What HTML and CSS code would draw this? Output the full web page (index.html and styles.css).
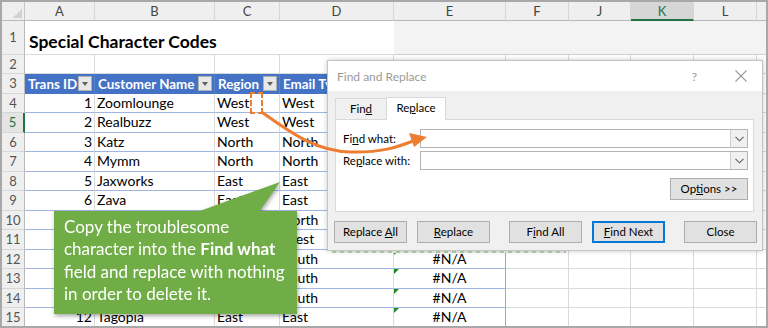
FILE: index.html
```html
<!DOCTYPE html>
<html>
<head>
<meta charset="utf-8">
<link rel="stylesheet" href="styles.css">
</head>
<body>
<div class="frame">
  <div class="sheet">
    <div class="corner"></div><div class="ch">A</div><div class="ch">B</div><div class="ch">C</div><div class="ch">D</div><div class="ch">E</div><div class="ch">F</div><div class="ch">J</div><div class="ch sel">K</div><div class="ch">L</div><div class="ch"></div>

    <div class="rh">1</div><div class="title">Special Character Codes</div><div class="r1rest"></div>

    <div class="rh">2</div><div class="c"></div><div class="c"></div><div class="c"></div><div class="c"></div><div class="c"></div><div class="c"></div><div class="c"></div><div class="c"></div><div class="c"></div><div class="c"></div>

    <div class="rh">3</div>
    <div class="th"><span>Trans ID</span><span class="dd"></span></div>
    <div class="th"><span>Customer Name</span><span class="dd"></span></div>
    <div class="th"><span>Region</span><span class="dd"></span></div>
    <div class="th"><span>Email Type</span><span class="dd"></span></div>
    <div class="th te"></div>
    <div class="c"></div><div class="c"></div><div class="c"></div><div class="c"></div><div class="c"></div>

    <div class="rh">4</div><div class="c t num">1</div><div class="c t">Zoomlounge</div><div class="c t">West</div><div class="c t">West</div><div class="c t te"></div><div class="c"></div><div class="c"></div><div class="c"></div><div class="c"></div><div class="c"></div>
    <div class="rh sel">5</div><div class="c t num">2</div><div class="c t">Realbuzz</div><div class="c t">West</div><div class="c t">West</div><div class="c t te"></div><div class="c"></div><div class="c"></div><div class="c"></div><div class="c"></div><div class="c"></div>
    <div class="rh">6</div><div class="c t num">3</div><div class="c t">Katz</div><div class="c t">North</div><div class="c t">North</div><div class="c t te"></div><div class="c"></div><div class="c"></div><div class="c"></div><div class="c"></div><div class="c"></div>
    <div class="rh">7</div><div class="c t num">4</div><div class="c t">Mymm</div><div class="c t">North</div><div class="c t">North</div><div class="c t te"></div><div class="c"></div><div class="c"></div><div class="c"></div><div class="c"></div><div class="c"></div>
    <div class="rh">8</div><div class="c t num">5</div><div class="c t">Jaxworks</div><div class="c t">East</div><div class="c t">East</div><div class="c t te"></div><div class="c"></div><div class="c"></div><div class="c"></div><div class="c"></div><div class="c"></div>
    <div class="rh">9</div><div class="c t num">6</div><div class="c t">Zava</div><div class="c t">East</div><div class="c t">East</div><div class="c t te"></div><div class="c"></div><div class="c"></div><div class="c"></div><div class="c"></div><div class="c"></div>
    <div class="rh">10</div><div class="c t num"></div><div class="c t"></div><div class="c t"></div><div class="c t">North</div><div class="c t te"></div><div class="c"></div><div class="c"></div><div class="c"></div><div class="c"></div><div class="c"></div>
    <div class="rh">11</div><div class="c t num"></div><div class="c t"></div><div class="c t"></div><div class="c t">West</div><div class="c t te"></div><div class="c"></div><div class="c"></div><div class="c"></div><div class="c"></div><div class="c"></div>
    <div class="rh">12</div><div class="c t num"></div><div class="c t"></div><div class="c t"></div><div class="c t">South</div><div class="c t te na">#N/A</div><div class="c"></div><div class="c"></div><div class="c"></div><div class="c"></div><div class="c"></div>
    <div class="rh">13</div><div class="c t num"></div><div class="c t"></div><div class="c t"></div><div class="c t">South</div><div class="c t te na">#N/A</div><div class="c"></div><div class="c"></div><div class="c"></div><div class="c"></div><div class="c"></div>
    <div class="rh">14</div><div class="c t num"></div><div class="c t"></div><div class="c t"></div><div class="c t">South</div><div class="c t te na">#N/A</div><div class="c"></div><div class="c"></div><div class="c"></div><div class="c"></div><div class="c"></div>
    <div class="rh">15</div><div class="c t num">12</div><div class="c t">Tagopia</div><div class="c t">East</div><div class="c t">East</div><div class="c t te na">#N/A</div><div class="c"></div><div class="c"></div><div class="c"></div><div class="c"></div><div class="c"></div>
  </div>

  <div class="dialog">
    <div class="dtitle"><span class="dt">Find and Replace</span><span class="help">?</span>
      <svg class="xbtn" width="12" height="12" viewBox="0 0 12 12"><path d="M0.5 0.5 L11.5 11.5 M11.5 0.5 L0.5 11.5" stroke="#9a9a9a" stroke-width="1.1" fill="none"/></svg>
    </div>
    <div class="dbody">
      <div class="tabs">
        <div class="tab">Fin<u>d</u></div>
        <div class="tab active">Re<u>p</u>lace</div>
      </div>
      <div class="panel">
        <div class="frow">
          <span class="lbl">Fi<u>n</u>d what:</span>
          <div class="combo"><span class="cbtn"><svg width="9" height="6" viewBox="0 0 9 6"><path d="M0.5 0.8 L4.5 4.8 L8.5 0.8" stroke="#606060" stroke-width="1.1" fill="none"/></svg></span></div>
        </div>
        <div class="frow">
          <span class="lbl">Re<u>p</u>lace with:</span>
          <div class="combo"><span class="cbtn"><svg width="9" height="6" viewBox="0 0 9 6"><path d="M0.5 0.8 L4.5 4.8 L8.5 0.8" stroke="#606060" stroke-width="1.1" fill="none"/></svg></span></div>
        </div>
        <div class="optrow"><div class="btn opt">Op<u>t</u>ions &gt;&gt;</div></div>
      </div>
      <div class="btnrow">
        <div class="btn">Replace <u>A</u>ll</div>
        <div class="btn"><u>R</u>eplace</div>
        <div class="btn grp">F<u>i</u>nd All</div>
        <div class="btn focus"><u>F</u>ind Next</div>
        <div class="btn grp">Close</div>
      </div>
    </div>
  </div>

  <div class="marquee"></div>

  <svg class="arrow" width="764" height="324" viewBox="2 2 764 324">
    <path d="M263 113 C 290 132, 315 151, 350 152 C 380 153, 398 147, 413 141" fill="none" stroke="#ed7d31" stroke-width="3" stroke-linecap="round"/>
    <polygon points="427,137 409,133 414,147" fill="#ed7d31"/>
  </svg>

  <div class="callout">Copy the troublesome character into the <b>Find what</b> field and replace with nothing in order to delete it.</div>
</div>
</body>
</html>
```
FILE: styles.css
```css
* { box-sizing: border-box; }
html, body { margin: 0; padding: 0; }
body {
  width: 768px;
  height: 328px;
  overflow: hidden;
  background: #fff;
  font-family: Lato, "Liberation Sans", sans-serif;
}
.frame {
  position: relative;
  width: 768px;
  height: 328px;
  border: 2px solid #a8a8a8;
  overflow: hidden;
}
.sheet {
  display: grid;
  grid-template-columns: 23px 70px 120px 65px 114px 112px 63px 62px 63px 63px 20px;
  grid-template-rows: 19px 33.5px repeat(14, 19.5px);
  font-size: 14px;
  color: #000;
}
.corner {
  position: relative;
  background: #efefef;
  border-right: 1px solid #c6c6c6;
  border-bottom: 1px solid #b8b8b8;
}
.corner::after {
  content: "";
  position: absolute;
  right: 2px;
  bottom: 2px;
  width: 9px;
  height: 9px;
  background: linear-gradient(to top left, #d2d2d2 50%, transparent 50%);
}
.ch {
  background: #efefef;
  border-right: 1px solid #d6d6d6;
  border-bottom: 1px solid #b8b8b8;
  color: #444;
  font-size: 13px;
  text-align: center;
  line-height: 18px;
}
.ch.sel {
  background: #d6d6d6;
  color: #217346;
  border-bottom: 2px solid #217346;
}
.rh {
  background: #efefef;
  border-right: 1px solid #b8b8b8;
  border-bottom: 1px solid #d6d6d6;
  color: #555;
  font-size: 13px;
  text-align: center;
  display: flex;
  align-items: center;
  justify-content: center;
}
.rh.sel {
  color: #217346;
  border-right: 2px solid #217346;
  background: #e4e4e4;
}
.c {
  border-right: 1px solid #dadada;
  border-bottom: 1px solid #dadada;
  padding: 0 2px;
  line-height: 18.5px;
  white-space: nowrap;
  overflow: visible;
}
.c.t { border-bottom-color: #9fb6e2; }
.te { border-right: 1px solid #8ea9db !important; }
.num { text-align: right; padding-right: 2px; }
.na { text-align: center; position: relative; }
.na::before {
  content: "";
  position: absolute;
  left: 0;
  top: 0;
  border-top: 5px solid #1e8a1e;
  border-right: 5px solid transparent;
}
.title {
  grid-column: span 4;
  background: #fff;
  border-bottom: 1px solid #dadada;
  font-weight: 700;
  font-size: 17.5px;
  padding: 10px 0 0 4px;
  white-space: nowrap;
}
.r1rest {
  grid-column: span 6;
  background: #f3f3f3;
  border-bottom: 1px solid #cfcfcf;
}
.th {
  background: #4472c4;
  color: #fff;
  font-weight: 700;
  font-size: 13.4px;
  border-right: 1px solid #5a83cc;
  display: flex;
  align-items: center;
  justify-content: space-between;
  padding: 0 2px 0 3px;
  white-space: nowrap;
  overflow: hidden;
}
.dd {
  flex: none;
  width: 14px;
  height: 15px;
  background: #e8e8e8;
  border: 1px solid #b0b0b0;
  position: relative;
}
.dd::after {
  content: "";
  position: absolute;
  left: 3px;
  top: 5px;
  border-left: 3.5px solid transparent;
  border-right: 3.5px solid transparent;
  border-top: 4px solid #606060;
}

.marquee {
  position: absolute;
  left: 248px;
  top: 90px;
  width: 13px;
  height: 22px;
  border: 2.5px dashed #ed7d31;
}
.arrow {
  position: absolute;
  left: 0;
  top: 0;
  pointer-events: none;
}

.dialog {
  position: absolute;
  left: 325px;
  top: 58px;
  width: 436px;
  height: 191px;
  border: 1px solid #c4c4c4;
  background: #f0f0f0;
  box-shadow: 0 0 5px rgba(0,0,0,0.22);
  font-family: "Segoe UI", Lato, "Liberation Sans", sans-serif;
  font-size: 11.5px;
  color: #000;
}
.dialog::after {
  content: "";
  position: absolute;
  left: 4px;
  right: 196px;
  bottom: -3px;
  height: 2px;
  background: repeating-linear-gradient(90deg, #a9c49a 0 4px, #dcdcdc 4px 8px);
}
.dtitle {
  height: 30px;
  background: #fff;
  display: flex;
  align-items: center;
  padding: 0 15px 0 9px;
}
.dt { color: #9a9a9a; font-size: 12px; flex: 1; }
.help { color: #9a9a9a; font-size: 12px; margin-right: 38px; }
.xbtn { display: block; }
.dbody { padding-top: 6px; }
.tabs {
  display: flex;
  align-items: flex-end;
  padding-left: 7px;
  height: 22px;
}
.tab {
  width: 51px;
  height: 21px;
  border: 1px solid #d9d9d9;
  border-right: none;
  border-bottom: none;
  text-align: center;
  line-height: 20px;
}
.tab.active {
  width: 60px;
  height: 23px;
  background: #fff;
  border-right: 1px solid #d9d9d9;
  margin-bottom: -1px;
  position: relative;
  z-index: 1;
  line-height: 20px;
}
.panel {
  margin: 0 8px 0 7px;
  height: 93px;
  background: #fff;
  border: 1px solid #d9d9d9;
  padding: 9px 5px 0 7px;
}
.frow {
  display: flex;
  align-items: center;
  height: 19px;
  margin-bottom: 3px;
}
.lbl { width: 77px; flex: none; }
.combo {
  flex: 1;
  height: 19px;
  border: 1px solid #b4b4b4;
  background: #fff;
  display: flex;
  justify-content: flex-end;
}
.cbtn {
  width: 17px;
  height: 17px;
  background: #f0f0f0;
  border-left: 1px solid #d0d0d0;
  display: flex;
  align-items: center;
  justify-content: center;
}
.optrow {
  display: flex;
  justify-content: flex-end;
  margin-top: 8px;
}
.btn {
  width: 73px;
  height: 22px;
  background: #e1e1e1;
  border: 1px solid #adadad;
  text-align: center;
  line-height: 20px;
  white-space: nowrap;
}
.btn.opt { width: 78px; }
.btnrow {
  display: flex;
  gap: 10px;
  padding-left: 6px;
  margin-top: 9px;
}
.btn.grp { margin-left: 9px; }
.btn.focus {
  border: 1px solid #0078d7;
  box-shadow: inset 0 0 0 1px #0078d7;
}

.callout {
  position: absolute;
  left: 52px;
  top: 209px;
  width: 243px;
  height: 103px;
  background: #70ad47;
  color: #fff;
  font-size: 17px;
  line-height: 22.3px;
  padding: 5px 6px 0 10px;
  filter: drop-shadow(1px 2px 2px rgba(0,0,0,0.35));
}
.callout::before {
  content: "";
  position: absolute;
  left: 143px;
  top: -29px;
  width: 84px;
  height: 30px;
  background: #70ad47;
  clip-path: polygon(0 30px, 83px 0, 62px 30px);
}
```
